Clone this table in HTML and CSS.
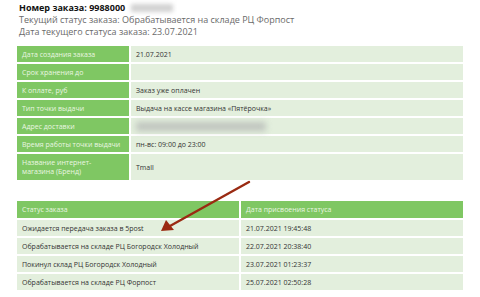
FILE: index.html
```html
<!DOCTYPE html>
<html>
<head>
<meta charset="utf-8">
<link rel="stylesheet" href="styles.css">
</head>
<body>
<div class="page">
  <div class="info">
    <div class="num">Номер заказа: 9988000 <span class="blur-num"></span></div>
    <div class="line">Текущий статус заказа: Обрабатывается на складе РЦ Форпост</div>
    <div class="line">Дата текущего статуса заказа: 23.07.2021</div>
  </div>
  <table class="tbl details">
    <tr><th>Дата создания заказа</th><td>21.07.2021</td></tr>
    <tr><th>Срок хранения до</th><td></td></tr>
    <tr><th>К оплате, руб</th><td>Заказ уже оплачен</td></tr>
    <tr><th>Тип точки выдачи</th><td>Выдача на кассе магазина «Пятёрочка»</td></tr>
    <tr><th>Адрес доставки</th><td><span class="blur-addr"></span></td></tr>
    <tr><th>Время работы точки выдачи</th><td>пн-вс: 09:00 до 23:00</td></tr>
    <tr class="tall"><th>Название интернет-<br>магазина (Бренд)</th><td>Tmall</td></tr>
  </table>
  <table class="tbl history">
    <tr class="head"><th>Статус заказа</th><th>Дата присвоения статуса</th></tr>
    <tr><td>Ожидается передача заказа в 5post</td><td>21.07.2021 19:45:48</td></tr>
    <tr><td>Обрабатывается на складе РЦ Богородск Холодный</td><td>22.07.2021 20:38:40</td></tr>
    <tr><td>Покинул склад РЦ Богородск Холодный</td><td>23.07.2021 01:23:37</td></tr>
    <tr><td>Обрабатывается на складе РЦ Форпост</td><td>25.07.2021 02:50:28</td></tr>
  </table>
  <svg class="arrow" width="480" height="297" viewBox="0 0 480 297">
    <line x1="249" y1="182" x2="170" y2="226" stroke="#9a2a12" stroke-width="2.4" stroke-linecap="round"/>
    <polygon points="161,231 166,220 174,230" fill="#9a2a12"/>
  </svg>
</div>
</body>
</html>
```
FILE: styles.css
```css
html, body {
  margin: 0;
  padding: 0;
  background: #ffffff;
}
.page {
  position: relative;
  width: 480px;
  height: 297px;
  overflow: hidden;
  font-family: "Open Sans", "Noto Sans", sans-serif;
}
.info {
  padding: 2px 0 0 19px;
}
.num {
  font-family: "Open Sans", sans-serif;
  font-weight: bold;
  font-size: 9px;
  line-height: 12px;
  color: #111;
  display: flex;
  align-items: center;
}
.blur-num {
  display: inline-block;
  width: 42px;
  height: 8px;
  margin-left: 6px;
  background: #d2d2d2;
  filter: blur(2px);
}
.line {
  font-size: 9px;
  line-height: 11.5px;
  color: #6a6a6a;
}
.tbl {
  border-collapse: separate;
  border-spacing: 2px;
  margin-left: 15px;
  width: 450px;
  font-size: 7px;
  table-layout: fixed;
}
.tbl th, .tbl td {
  padding: 0 0 0 5px;
  text-align: left;
  font-weight: normal;
  height: 16px;
  vertical-align: middle;
  white-space: nowrap;
}
.tbl th {
  background: #7fc763;
  color: #eaf6e2;
}
.tbl td {
  background: #e3efdd;
  color: #333;
}
.details {
  margin-top: 7px;
}
.details th {
  width: 107px;
}
.details .tall th, .details .tall td {
  height: 26px;
  line-height: 9px;
}
.blur-addr {
  display: inline-block;
  width: 130px;
  height: 9px;
  background: #bfc4be;
  filter: blur(3px);
  vertical-align: middle;
}
.history {
  margin-top: 17px;
}
.history .head th {
  height: 17px;
}
.arrow {
  position: absolute;
  left: 0;
  top: 0;
  pointer-events: none;
}
```
